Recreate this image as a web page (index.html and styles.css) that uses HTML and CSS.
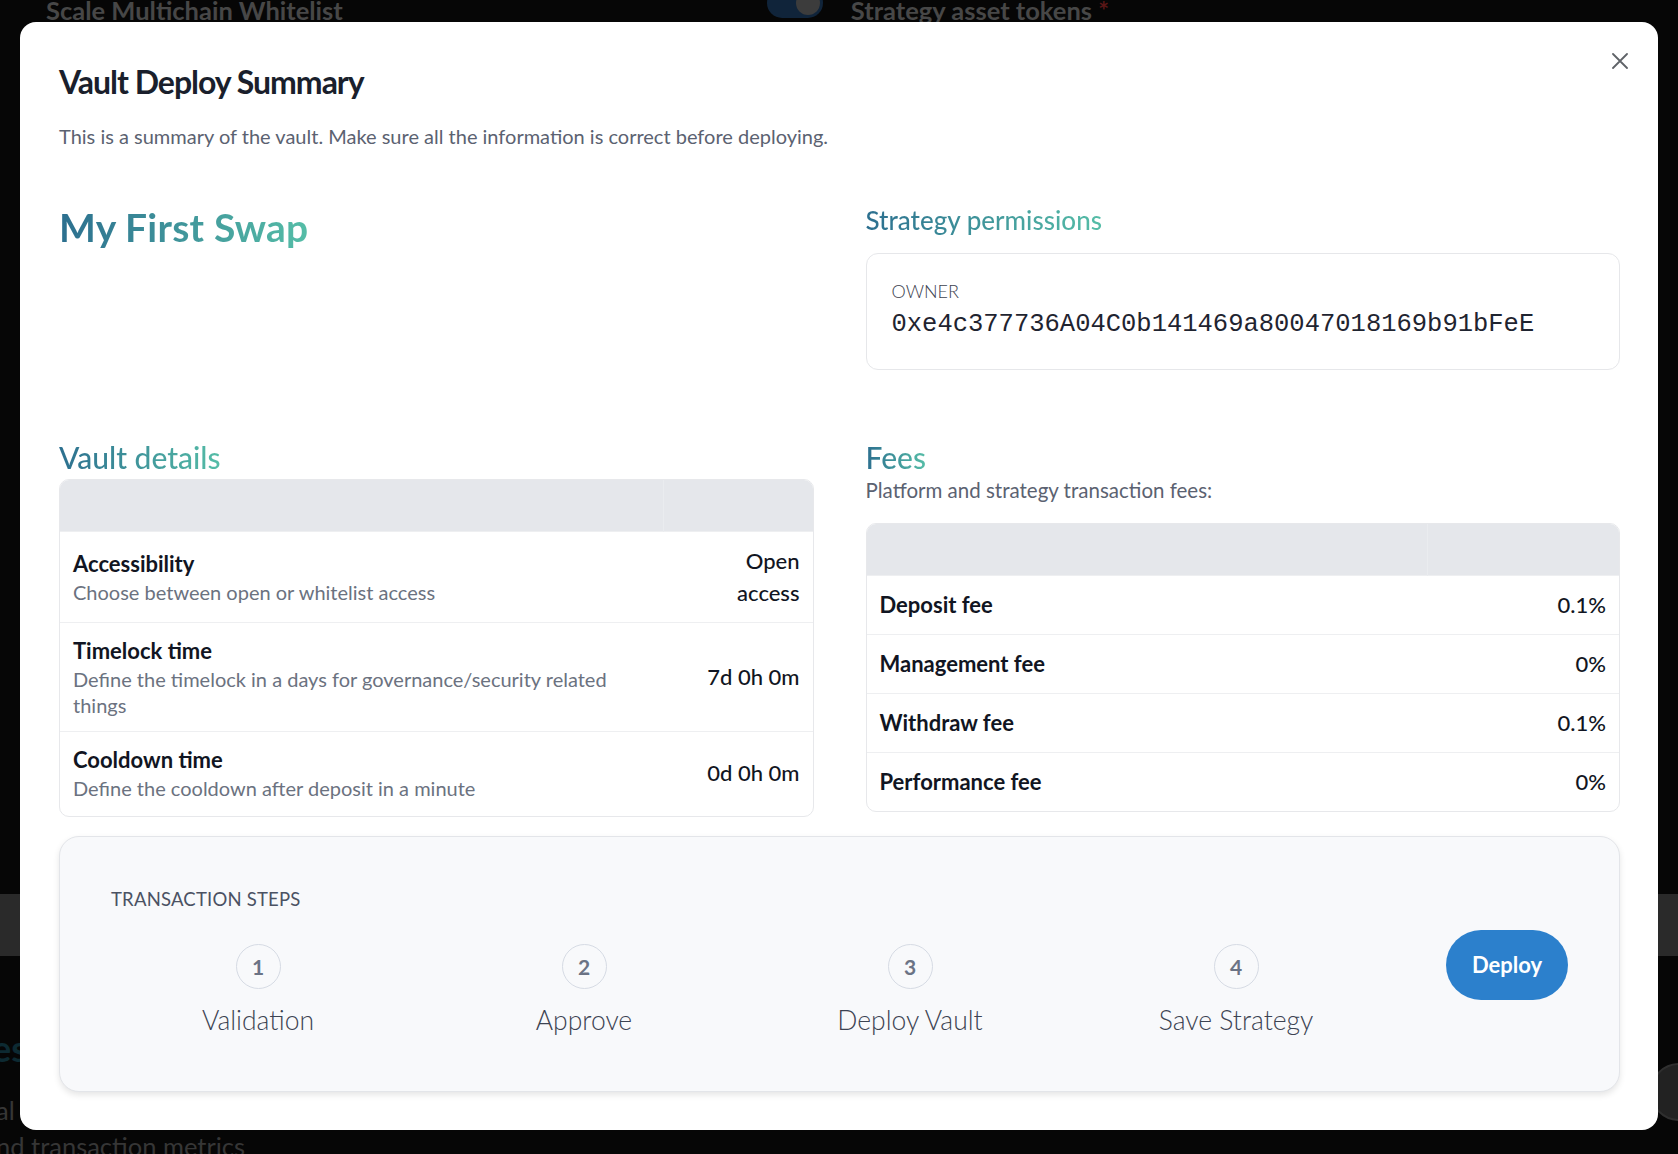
FILE: index.html
```html
<!DOCTYPE html>
<html lang="en">
<head>
<meta charset="utf-8">
<title>Vault Deploy Summary</title>
<link rel="stylesheet" href="styles.css">
</head>
<body>
<div class="page">
  <div class="bg-top">
    <span class="bg-title">Scale Multichain Whitelist</span>
    <span class="bg-toggle"><span class="bg-knob"></span></span>
    <span class="bg-title bg-title-2">Strategy asset tokens <span class="bg-star">*</span></span>
  </div>
  <div class="bg-band"></div>
  <div class="bg-heading">es</div>
  <div class="bg-text bg-text-1">al</div>
  <div class="bg-text bg-text-2">nd transaction metrics</div>
  <div class="bg-circle"></div>
</div>

<div class="modal">
  <button class="close" aria-label="Close">
    <svg width="16" height="16" viewBox="0 0 16 16"><path d="M1 1 L15 15 M15 1 L1 15" stroke="#5f6368" stroke-width="1.8" fill="none" stroke-linecap="round"/></svg>
  </button>
  <h1 class="m-title">Vault Deploy Summary</h1>
  <p class="m-sub">This is a summary of the vault. Make sure all the information is correct before deploying.</p>

  <div class="grid">
    <div class="cell">
      <h2 class="vault-name grad">My First Swap</h2>
    </div>
    <div class="cell">
      <h3 class="sec sec-sm grad">Strategy permissions</h3>
      <div class="owner-box">
        <div class="owner-label">OWNER</div>
        <div class="owner-addr">0xe4c377736A04C0b141469a80047018169b91bFeE</div>
      </div>
    </div>
    <div class="cell">
      <h3 class="sec grad">Vault details</h3>
      <div class="tbl-wrap tbl-vault">
        <table>
          <colgroup><col><col class="col-v"></colgroup>
          <thead><tr><th></th><th></th></tr></thead>
          <tbody>
            <tr>
              <td><div class="lbl">Accessibility</div><div class="desc">Choose between open or whitelist access</div></td>
              <td class="val">Open access</td>
            </tr>
            <tr>
              <td><div class="lbl">Timelock time</div><div class="desc">Define the timelock in a days for governance/security related things</div></td>
              <td class="val">7d 0h 0m</td>
            </tr>
            <tr class="row-last">
              <td><div class="lbl">Cooldown time</div><div class="desc">Define the cooldown after deposit in a minute</div></td>
              <td class="val">0d 0h 0m</td>
            </tr>
          </tbody>
        </table>
      </div>
    </div>
    <div class="cell">
      <h3 class="sec grad">Fees</h3>
      <p class="sec-sub">Platform and strategy transaction fees:</p>
      <div class="tbl-wrap tbl-fees">
        <table>
          <colgroup><col><col class="col-f"></colgroup>
          <thead><tr><th></th><th></th></tr></thead>
          <tbody>
            <tr><td><div class="lbl">Deposit fee</div></td><td class="val">0.1%</td></tr>
            <tr><td><div class="lbl">Management fee</div></td><td class="val">0%</td></tr>
            <tr><td><div class="lbl">Withdraw fee</div></td><td class="val">0.1%</td></tr>
            <tr><td><div class="lbl">Performance fee</div></td><td class="val">0%</td></tr>
          </tbody>
        </table>
      </div>
    </div>
  </div>

  <div class="steps">
    <div class="steps-title">TRANSACTION STEPS</div>
    <div class="steps-row">
      <div class="step"><span class="step-num">1</span><span class="step-label">Validation</span></div>
      <div class="step"><span class="step-num">2</span><span class="step-label">Approve</span></div>
      <div class="step"><span class="step-num">3</span><span class="step-label">Deploy Vault</span></div>
      <div class="step"><span class="step-num">4</span><span class="step-label">Save Strategy</span></div>
      <button class="deploy">Deploy</button>
    </div>
  </div>
</div>
</body>
</html>
```

FILE: styles.css
```css
* { box-sizing: border-box; margin: 0; padding: 0; }

body {
  background: #050505;
  font-family: Lato, "Noto Sans", sans-serif;
  width: 1678px;
  height: 1154px;
  overflow: hidden;
}

/* background page (dimmed under overlay) */
.page {
  position: relative;
  height: 1154px;
  overflow: hidden;
  background: #060606;
}
.bg-top {
  display: flex;
  align-items: center;
  height: 22px;
  margin-top: -1px;
  padding-left: 46px;
}
.bg-title {
  font-size: 25.5px;
  line-height: 22px;
  font-weight: 700;
  color: #474747;
  white-space: nowrap;
}
.bg-title-2 { margin-left: 28px; }
.bg-star { color: #5a1616; }
.bg-toggle {
  display: flex;
  justify-content: flex-end;
  align-items: center;
  margin-left: 424px;
  width: 56px;
  height: 30px;
  margin-top: -14px;
  border-radius: 15px;
  background: #10243a;
  padding: 3px;
}
.bg-knob {
  width: 24px;
  height: 24px;
  border-radius: 50%;
  background: #3c3c3c;
}
.bg-band {
  margin-top: 873px;
  height: 62px;
  background: #2a2a2a;
}
.bg-heading {
  margin-top: 72px;
  margin-left: -8px;
  font-size: 36px;
  line-height: 40px;
  font-weight: 700;
  color: #0d2a32;
}
.bg-text {
  font-size: 25.5px;
  line-height: 28px;
  color: #363636;
}
.bg-text-1 { margin-top: 28px; margin-left: -4px; }
.bg-text-2 { margin-top: 8px; margin-left: -4px; }
.bg-circle {
  position: absolute;
  left: 1650px;
  top: 1063px;
  width: 58px;
  height: 58px;
  border-radius: 50%;
  background: #222;
  border: 2px solid #2f2f2f;
}

/* modal */
.modal {
  position: absolute;
  left: 20px;
  top: 22px;
  width: 1638px;
  height: 1108px;
  background: #fff;
  border-radius: 16px;
  padding: 42px 38px 0 39px;
}
.close {
  position: absolute;
  right: 30px;
  top: 31px;
  width: 16px;
  height: 16px;
  border: none;
  background: none;
  display: flex;
}
.m-title {
  font-size: 32px;
  line-height: 36px;
  font-weight: 700;
  letter-spacing: -1px;
  color: #1a1f2c;
}
.m-sub {
  margin-top: 23px;
  font-size: 20px;
  line-height: 26px;
  color: #5b6271;
}

.grid {
  display: grid;
  grid-template-columns: 1fr 1fr;
  column-gap: 52px;
  row-gap: 70px;
  margin-top: 55px;
}
.grad {
  display: inline-block;
  background: linear-gradient(90deg, #2c6f8f, #55bda7);
  -webkit-background-clip: text;
  background-clip: text;
  color: transparent;
}
.vault-name {
  font-size: 39px;
  line-height: 46px;
  font-weight: 700;
  letter-spacing: 0.2px;
}
.sec {
  font-size: 30px;
  line-height: 34px;
  font-weight: 500;
}
.sec-sm {
  font-size: 26px;
  line-height: 32px;
}
.sec-sub {
  margin-top: 3px;
  font-size: 20.5px;
  line-height: 26px;
  color: #5b6271;
}

.owner-box {
  margin-top: 17px;
  border: 1px solid #e6e7ea;
  border-radius: 12px;
  padding: 27px 25px 29px;
}
.owner-label {
  font-size: 18px;
  line-height: 20px;
  font-weight: 300;
  color: #3d4350;
}
.owner-addr {
  margin-top: 9px;
  font-family: "Liberation Mono", "DejaVu Sans Mono", monospace;
  font-size: 25.5px;
  line-height: 30px;
  color: #1f2430;
}

.tbl-wrap {
  border: 1px solid #e7e8eb;
  border-radius: 10px;
  overflow: hidden;
  margin-top: 5px;
}
.tbl-fees { margin-top: 20px; }
table {
  width: 100%;
  border-collapse: collapse;
  table-layout: fixed;
}
.col-v { width: 149px; }
.col-f { width: 192px; }
th {
  height: 51px;
  background: #e5e7eb;
  padding: 0;
}
th + th { border-left: 1px solid #eaecef; }
td {
  border-top: 1px solid #eeeff1;
  padding: 13px 13px;
  vertical-align: middle;
}
.row-last td { padding-bottom: 15px; }
.tbl-vault .val { padding-left: 26px; }
.tbl-fees td { padding: 14px 13px 14px; }
.tbl-fees .val { line-height: 30px; }
.lbl {
  font-size: 22px;
  line-height: 30px;
  font-weight: 700;
  color: #111522;
}
.desc {
  font-size: 20px;
  line-height: 26px;
  color: #6b7280;
}
.val {
  text-align: right;
  font-size: 22px;
  line-height: 32px;
  font-weight: 500;
  color: #111522;
}

/* transaction steps */
.steps {
  margin-top: 19px;
  height: 256px;
  background: #f8f9fb;
  border: 1px solid #e3e5e9;
  border-radius: 20px;
  box-shadow: 0 3px 6px rgba(0, 0, 0, 0.1);
  padding: 50px 51px 0 35px;
}
.steps-title {
  margin-left: 16px;
  font-size: 18.5px;
  line-height: 24px;
  color: #4b5263;
  letter-spacing: 0.2px;
}
.steps-row {
  display: flex;
  align-items: flex-start;
  margin-top: 19px;
}
.step {
  width: 326px;
  padding-top: 14px;
  display: flex;
  flex-direction: column;
  align-items: center;
}
.step-num {
  width: 45px;
  height: 45px;
  border-radius: 50%;
  border: 1px solid #d6dbe4;
  display: flex;
  align-items: center;
  justify-content: center;
  font-size: 21px;
  font-weight: 700;
  color: #6b7385;
}
.step-label {
  margin-top: 15px;
  font-size: 26.5px;
  line-height: 32px;
  font-weight: 300;
  color: #3c4352;
}
.deploy {
  margin-left: auto;
  width: 122px;
  height: 70px;
  border: none;
  border-radius: 35px;
  background: #2c80cc;
  color: #fff;
  font-family: Lato, "Noto Sans", sans-serif;
  font-size: 22px;
  font-weight: 700;
}
```
